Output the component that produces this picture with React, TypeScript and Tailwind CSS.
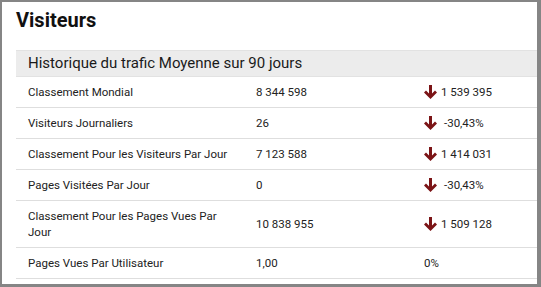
const rows = [
  { label: "Classement Mondial", value: "8 344 598", change: "1 539 395", down: true },
  { label: "Visiteurs Journaliers", value: "26", change: "-30,43%", down: true, gap: true },
  { label: "Classement Pour les Visiteurs Par Jour", value: "7 123 588", change: "1 414 031", down: true },
  { label: "Pages Visitées Par Jour", value: "0", change: "-30,43%", down: true, gap: true },
  { label: "Classement Pour les Pages Vues Par Jour", value: "10 838 955", change: "1 509 128", down: true },
  { label: "Pages Vues Par Utilisateur", value: "1,00", change: "0%", down: false },
];

function ArrowDown() {
  return (
    <svg width="13" height="14" viewBox="0 0 13 14" className="shrink-0">
      <path
        d="M5 0h3v8.5l3-3 2 2-6.5 6.5L0 7.5l2-2 3 3z"
        fill="#7b1416"
      />
    </svg>
  );
}

export default function App() {
  return (
    <div
      className="h-[287px] w-[541px] overflow-hidden border-b-[3px] border-l-2 border-r-4 border-t-2 border-[#858585] bg-white text-[#222]"
      style={{ fontFamily: "Roboto, 'Liberation Sans', sans-serif" }}
    >
      <div className="pl-[14px] pt-[5px]">
        <h1 className="text-[20px] font-bold leading-[26px] text-[#111]">
          Visiteurs
        </h1>

        <div className="mt-[17px] w-[560px]">
          <div className="flex h-[27px] items-center border-y border-[#e2e2e2] bg-[#ececec] pl-3 text-[15px] text-[#1a1a1a]">
            Historique du trafic Moyenne sur 90 jours
          </div>

          {rows.map((row) => (
            <div
              key={row.label}
              className="grid grid-cols-[240px_168px_1fr] items-center border-b border-[#dedede] py-[7px] text-[11.5px] leading-[16px]"
            >
              <div className="pl-3 pr-5">{row.label}</div>
              <div>{row.value}</div>
              <div className="flex items-center">
                {row.down ? <ArrowDown /> : null}
                <span className={row.down ? (row.gap ? "ml-[7px]" : "ml-[4px]") : ""}>
                  {row.change}
                </span>
              </div>
            </div>
          ))}
        </div>
      </div>
    </div>
  );
}
